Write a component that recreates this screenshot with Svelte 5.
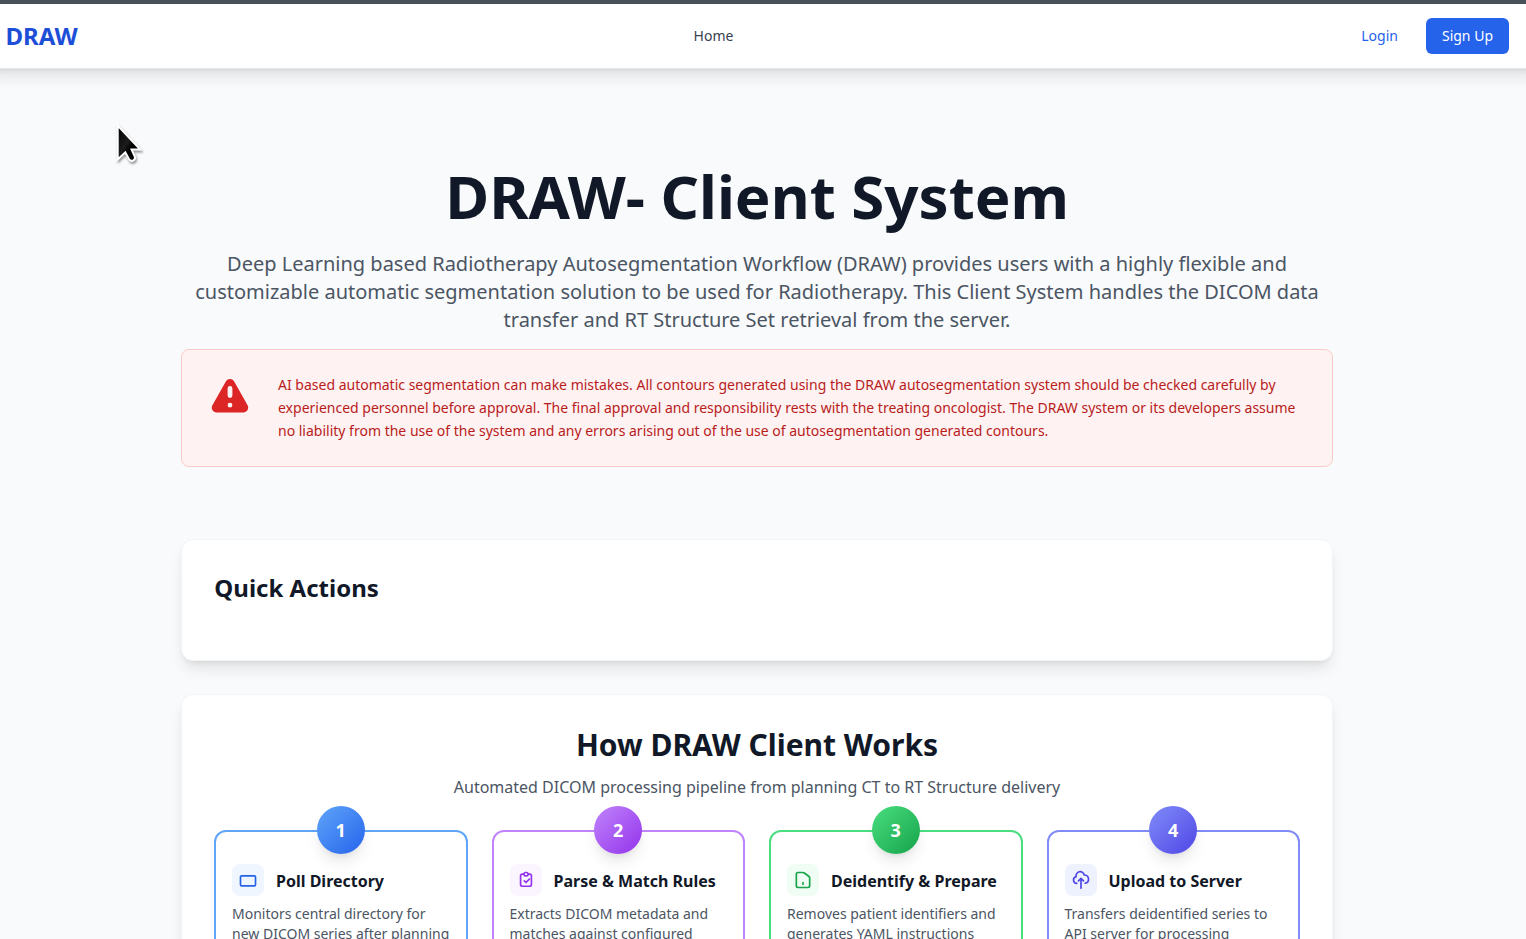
<script>
  const steps = [
    { tone: 'blue', title: 'Poll Directory', text: 'Monitors central directory for new DICOM series after planning CT acquisition',
      icon: 'M4.400 7h15.200A1.400 1.400 0 0 1 21 8.400v9.200a1.400 1.400 0 0 1-1.400 1.400H4.400A1.400 1.400 0 0 1 3 17.600V8.400A1.400 1.400 0 0 1 4.400 7z' },
    { tone: 'purple', title: 'Parse & Match Rules', text: 'Extracts DICOM metadata and matches against configured rules',
      icon: 'M9.500 5H7.500a2 2 0 00-2 2v10.500a2 2 0 002 2h9a2 2 0 002-2V7a2 2 0 00-2-2h-2M9.500 5a2 2 0 002 2h1a2 2 0 002-2M9.500 5a2 2 0 012-2h1a2 2 0 012 2m-4.500 8l2 2 4-4' },
    { tone: 'green', title: 'Deidentify & Prepare', text: 'Removes patient identifiers and generates YAML instructions',
      icon: 'M12 15v2m-6 4h12a2 2 0 002-2V9.400a2 2 0 00-.8-1.600l-5.600-4.200A3 3 0 0011.800 3H6a2 2 0 00-2 2v14a2 2 0 002 2z' },
    { tone: 'indigo', title: 'Upload to Server', text: 'Transfers deidentified series to API server for processing',
      icon: 'M7 16a4 4 0 01-.88-7.903A5 5 0 1115.9 6L16 6a5 5 0 011 9.9M15 13l-3-3m0 0l-3 3m3-3v12' }
  ];
</script>

<div class="page">
  <div class="strip"></div>
  <nav>
    <a class="brand" href="#top">DRAW</a>
    <a class="home" href="#home">Home</a>
    <div class="auth">
      <a class="login" href="#login">Login</a>
      <a class="signup" href="#signup">Sign Up</a>
    </div>
  </nav>

  <main>
    <h1>DRAW- Client System</h1>
    <p class="lead">Deep Learning based Radiotherapy Autosegmentation Workflow (DRAW) provides users with a highly flexible and customizable automatic segmentation solution to be used for Radiotherapy. This Client System handles the DICOM data transfer and RT Structure Set retrieval from the server.</p>

    <div class="alert">
      <svg viewBox="0 0 20 20" fill="currentColor"><path fill-rule="evenodd" clip-rule="evenodd" d="M8.257 3.099c.765-1.36 2.722-1.36 3.486 0l5.58 9.92c.75 1.334-.213 2.98-1.742 2.98H4.42c-1.53 0-2.493-1.646-1.743-2.98l5.58-9.92zM11 13a1 1 0 11-2 0 1 1 0 012 0zm-1-8a1 1 0 00-1 1v3a1 1 0 002 0V6a1 1 0 00-1-1z" /></svg>
      <p>AI based automatic segmentation can make mistakes. All contours generated using the DRAW autosegmentation system should be checked carefully by experienced personnel before approval. The final approval and responsibility rests with the treating oncologist. The DRAW system or its developers assume no liability from the use of the system and any errors arising out of the use of autosegmentation generated contours.</p>
    </div>

    <section class="card quick">
      <h2>Quick Actions</h2>
    </section>

    <section class="card works">
      <h2>How DRAW Client Works</h2>
      <p class="sub">Automated DICOM processing pipeline from planning CT to RT Structure delivery</p>
      <div class="steps">
        {#each steps as step, i}
          <article class={step.tone}>
            <span class="num">{i + 1}</span>
            <header>
              <span class="tile">
                <svg viewBox="0 0 24 24" fill="none" stroke="currentColor" stroke-width="2" stroke-linecap="round" stroke-linejoin="round"><path d={step.icon} /></svg>
              </span>
              <h3>{step.title}</h3>
            </header>
            <p>{step.text}</p>
          </article>
        {/each}
      </div>
    </section>
  </main>

  <svg class="pointer" width="34" height="44" viewBox="0 0 34 44">
    <defs>
      <linearGradient id="ink" x1="0" y1="0" x2="1" y2="1">
        <stop offset="0" stop-color="#000" /><stop offset=".45" stop-color="#1c1c1c" /><stop offset=".6" stop-color="#000" />
      </linearGradient>
    </defs>
    <path d="M4.700 3.500V37.500L12.300 30.300L16.300 37.700Q18 39.700 20.500 38.300Q22.700 36.800 21.800 34.500L18.600 27.600H27.300Z" fill="url(#ink)" stroke="#fff" stroke-width="2" stroke-linejoin="miter" />
  </svg>
</div>

<style>
  :global(body) { background: #f9fafb; overflow: hidden; }
  .page {
    position: relative;
    height: 939px;
    overflow: hidden;
    background: #f9fafb;
    font-family: "Noto Sans", sans-serif;
    color: #111827;
  }
  h1, h2, h3, p { margin: 0; }
  a { text-decoration: none; }
  .strip { height: 4px; background: #475157; }
  nav {
    display: flex;
    align-items: center;
    justify-content: space-between;
    height: 64px;
    margin: 0 -20px;
    padding: 0 37px 0 25.5px;
    background: #fff;
    border-bottom: 1px solid #e5e7eb;
    box-shadow: 0 10px 15px -3px rgba(0, 0, 0, .1), 0 4px 6px -4px rgba(0, 0, 0, .1);
    font-size: 14px;
    line-height: 20px;
  }
  .brand { flex: 1; font-size: 24px; line-height: 32px; font-weight: 700; color: #1d4ed8; }
  .home { color: #374151; margin-right: 87.5px; }
  .auth { flex: 1; display: flex; align-items: center; justify-content: flex-end; gap: 28px; }
  .login { color: #2563eb; }
  .signup { padding: 8px 16px; border-radius: 6px; background: #2563eb; color: #fff; }
  main { width: 1152px; margin-left: 181px; padding-top: 97px; }
  h1 { font-size: 60px; line-height: 60px; text-align: center; text-indent: .4px; }
  .lead { margin-top: 24px; font-size: 20px; line-height: 28px; text-align: center; color: #4b5563; }
  .alert {
    display: flex;
    gap: 24px;
    margin-top: 15px;
    padding: 24px;
    border: 1px solid #fecaca;
    border-radius: 8px;
    background: #fef2f2;
    color: #b91c1c;
    font-size: 14px;
    line-height: 22.75px;
  }
  .alert svg { flex: none; width: 48px; height: 48px; color: #dc2626; }
  .card {
    padding: 32px;
    border: 1px solid #f3f4f6;
    border-radius: 12px;
    background: #fff;
    box-shadow: 0 10px 15px -3px rgba(0, 0, 0, .1), 0 4px 6px -4px rgba(0, 0, 0, .1);
  }
  .quick { margin-top: 72px; }
  .quick h2 { margin-bottom: 24px; font-size: 24px; line-height: 32px; text-indent: .3px; }
  .works { margin-top: 32.4px; height: 400px; }
  .works h2 { font-size: 30px; line-height: 36px; text-align: center; }
  .sub { margin-top: 12px; font-size: 16px; line-height: 24px; text-align: center; color: #4b5563; }
  .steps { display: grid; grid-template-columns: repeat(4, 1fr); gap: 24px; margin-top: 31.7px; }
  article { position: relative; height: 220px; padding: 32px 16px 16px; border: 2px solid; border-radius: 12px; background: #fff; }
  .num {
    position: absolute;
    top: -26px;
    left: calc(50% - 24px);
    width: 48px;
    border-radius: 50%;
    color: #fff;
    font-size: 18px;
    font-weight: 700;
    line-height: 48px;
    text-align: center;
    box-shadow: 0 10px 15px -3px rgba(0, 0, 0, .1), 0 4px 6px -4px rgba(0, 0, 0, .1);
  }
  header { display: flex; align-items: center; gap: 12px; margin-bottom: 8px; }
  .tile { display: grid; place-items: center; width: 32px; height: 32px; border-radius: 8px; }
  .tile svg { width: 20px; height: 20px; }
  h3 { padding-top: 2px; font-size: 16px; line-height: 24px; color: #111827; }
  article p { font-size: 14px; line-height: 20px; color: #4b5563; }
  .blue { border-color: #60a5fa; }
  .blue .num { background: linear-gradient(to bottom right, #60a5fa, #2563eb); }
  .blue .tile { background: #eff6ff; color: #2563eb; }
  .purple { border-color: #c084fc; }
  .purple .num { background: linear-gradient(to bottom right, #c084fc, #9333ea); }
  .purple .tile { background: #faf5ff; color: #9333ea; }
  .green { border-color: #4ade80; }
  .green .num { background: linear-gradient(to bottom right, #4ade80, #16a34a); }
  .green .tile { background: #f0fdf4; color: #16a34a; }
  .indigo { border-color: #818cf8; }
  .indigo .num { background: linear-gradient(to bottom right, #818cf8, #4f46e5); }
  .indigo .tile { background: #eef2ff; color: #4f46e5; }
  .pointer { position: absolute; left: 113px; top: 122px; filter: drop-shadow(1px 2px 1px rgba(0, 0, 0, .4)); }
</style>
